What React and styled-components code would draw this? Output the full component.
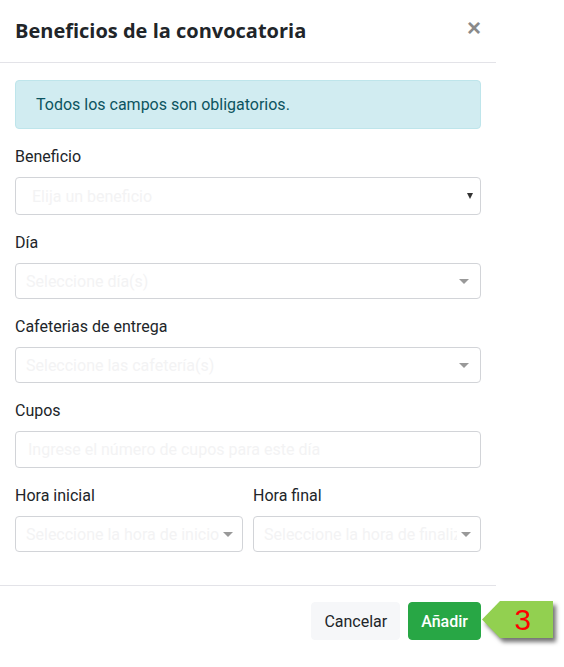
import React from "react";
import styled, { createGlobalStyle } from "styled-components";

const GlobalStyle = createGlobalStyle`
  html, body { margin: 0; padding: 0; background: #fff; }
  body { font-family: Roboto, "Noto Sans", Arial, sans-serif; color: #212529; }
  * { box-sizing: border-box; }
`;

const Modal = styled.div`
  width: 496px;
  background: #fff;
  position: relative;
`;

const Header = styled.div`
  height: 63px;
  padding: 0 15px;
  display: flex;
  align-items: center;
  justify-content: space-between;
  border-bottom: 1px solid #e3e3e8;
`;

const Title = styled.h5`
  margin: 0;
  font-family: "Open Sans", Roboto, sans-serif;
  font-weight: 700;
  font-size: 20px;
  line-height: 30px;
  color: #212529;
`;

const Close = styled.button`
  border: 0;
  background: none;
  padding: 0;
  margin: -6px 0 0 0;
  font-family: Arial, "Liberation Sans", sans-serif;
  font-size: 24px;
  font-weight: 700;
  line-height: 1;
  color: #8a8a8a;
  cursor: pointer;
`;

const Body = styled.div`
  padding: 17px 15px 17px;
`;

const Alert = styled.div`
  background: #d1ecf1;
  border: 1px solid #bee5eb;
  border-radius: 4px;
  color: #0c5460;
  padding: 12px 20px;
  font-size: 16px;
  line-height: 23px;
  margin-bottom: 16px;
`;

const Group = styled.div`
  min-width: 0;
  margin-bottom: 16px;
`;

const Label = styled.label`
  display: block;
  font-size: 16px;
  line-height: 24px;
  margin-bottom: 8px;
  color: #212529;
`;

const Control = styled.div`
  height: ${(p) => p.$h || 36}px;
  border: 1px solid #d2d4d8;
  border-radius: 4px;
  background: #fff;
  display: flex;
  align-items: center;
  padding: 0 ${(p) => p.$pr || 11}px 0 ${(p) => p.$pl || 10}px;
  gap: 4px;
  font-size: 16px;
  overflow: hidden;
`;

const Placeholder = styled.span`
  flex: 1;
  min-width: 0;
  white-space: nowrap;
  overflow: hidden;
  color: #f3f3f4;
`;

const Caret = styled.span`
  flex: none;
  width: 0;
  height: 0;
  border-left: 5px solid transparent;
  border-right: 5px solid transparent;
  border-top: 5px solid #999;
`;

const NativeArrow = styled.span`
  flex: none;
  width: 0;
  height: 0;
  border-left: 3px solid transparent;
  border-right: 3px solid transparent;
  border-top: 6px solid #333;
`;

const Row = styled.div`
  display: grid;
  grid-template-columns: minmax(0, 1fr) minmax(0, 1fr);
  column-gap: 10px;
`;

const Footer = styled.div`
  position: relative;
  border-top: 1px solid #e3e3e8;
  padding: 16px 15px 26px;
  display: flex;
  justify-content: flex-end;
  gap: 8px;
`;

const Button = styled.button`
  height: 38px;
  padding: 0 ${(p) => (p.$primary ? 12 : 12)}px;
  border-radius: 4px;
  border: 1px solid ${(p) => (p.$primary ? "#28a745" : "#f6f7f9")};
  background: ${(p) => (p.$primary ? "#28a745" : "#f6f7f9")};
  color: ${(p) => (p.$primary ? "#fff" : "#212529")};
  font-family: Roboto, sans-serif;
  font-size: 16px;
  font-weight: ${(p) => (p.$primary ? 500 : 400)};
  cursor: pointer;
`;

const CalloutWrap = styled.div`
  position: absolute;
  left: 482px;
  top: 15px;
  filter: drop-shadow(3px 4px 2px rgba(0, 0, 0, 0.55));
`;

const CalloutShape = styled.div`
  width: 71px;
  height: 37px;
  background: #92d050;
  clip-path: polygon(0 50%, 18px 0, 100% 0, 100% 100%, 18px 100%);
  display: flex;
  align-items: center;
  justify-content: center;
  padding-left: 10px;
  font-family: Arial, "Liberation Sans", sans-serif;
  font-size: 30px;
  line-height: 1;
  color: #ff0000;
`;

function SelectField({ label, placeholder, native, h, pl, pr }) {
  return (
    <Group>
      <Label>{label}</Label>
      <Control $h={h} $pl={pl} $pr={pr}>
        <Placeholder>{placeholder}</Placeholder>
        {native ? <NativeArrow /> : <Caret />}
      </Control>
    </Group>
  );
}

export default function App() {
  return (
    <>
      <GlobalStyle />
      <Modal>
        <Header>
          <Title>Beneficios de la convocatoria</Title>
          <Close aria-label="Cerrar">×</Close>
        </Header>
        <Body>
          <Alert>Todos los campos son obligatorios.</Alert>
          <SelectField
            label="Beneficio"
            placeholder="Elija un beneficio"
            native
            h={38}
            pl={16}
            pr={7}
          />
          <SelectField label="Día" placeholder="Seleccione día(s)" />
          <SelectField
            label="Cafeterias de entrega"
            placeholder="Seleccione las cafetería(s)"
          />
          <Group>
            <Label>Cupos</Label>
            <Control $h={37} $pl={12}>
              <Placeholder>Ingrese el número de cupos para este día</Placeholder>
            </Control>
          </Group>
          <Row>
            <SelectField
              label="Hora inicial"
              placeholder="Seleccione la hora de inicio"
              pr={9}
            />
            <SelectField
              label="Hora final"
              placeholder="Seleccione la hora de finalización"
              pr={9}
            />
          </Row>
        </Body>
        <Footer>
          <Button>Cancelar</Button>
          <Button $primary>Añadir</Button>
          <CalloutWrap>
            <CalloutShape>3</CalloutShape>
          </CalloutWrap>
        </Footer>
      </Modal>
    </>
  );
}
